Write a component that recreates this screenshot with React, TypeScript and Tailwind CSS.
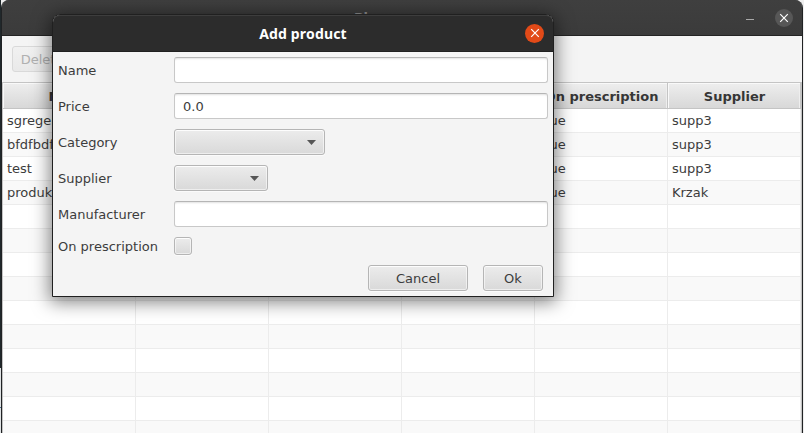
import React from 'react';

const columns = ['Name', 'Price', 'Category', 'Manufacturer', 'On prescription', 'Supplier'];

const products: string[][] = [
  ['sgregergerg', '0.0', '', '', 'true', 'supp3'],
  ['bfdfbdfb', '0.0', '', '', 'true', 'supp3'],
  ['test', '0.0', '', '', 'true', 'supp3'],
  ['produkt', '0.0', '', '', 'true', 'Krzak'],
];

const emptyRows: string[][] = Array.from({ length: 10 }, () => ['', '', '', '', '', '']);

const buttonFace =
  'rounded-[3px] border border-[#b5b5b5] bg-linear-to-b from-[#ececec] to-[#d9d9d9] shadow-[inset_0_0_0_1px_rgba(255,255,255,0.55),inset_0_1px_0_#fafafa,0_1px_0_#fbfbfb]';

function Cross() {
  return (
    <svg width="18" height="18" viewBox="0 0 18 18" fill="none" stroke="#fff" strokeWidth="1.2">
      <path d="M5.2 5.2 12.8 12.8M12.8 5.2 5.2 12.8" />
    </svg>
  );
}

function TextField({ value = '' }: { value?: string }) {
  return (
    <div className="h-[26px] w-[374px] rounded-[3px] border border-[#c8c8c8] border-t-[#b5b5b5] bg-white px-2 pt-px leading-6 shadow-[inset_0_2px_2px_-1px_rgba(0,0,0,0.12)]">
      {value}
    </div>
  );
}

function ComboBox({ width }: { width: string }) {
  return (
    <div className={`${width} flex h-[26px] items-center justify-end pr-2 ${buttonFace}`}>
      <svg width="9" height="5" viewBox="0 0 9 5" fill="#565656">
        <path d="M0 0H9L4.5 5Z" />
      </svg>
    </div>
  );
}

function Field({ label, children }: { label: string; children: React.ReactNode }) {
  return (
    <div className="flex items-center">
      <span className="w-[116px] shrink-0 whitespace-nowrap pt-[2px] leading-4">{label}</span>
      {children}
    </div>
  );
}

function AddProductDialog() {
  return (
    <section className="absolute left-[52px] top-[14px] h-[283px] w-[502px] overflow-visible rounded-t-lg border border-[#202020] bg-[#f4f4f4] shadow-[0_3px_18px_2px_rgba(0,0,0,0.5)]">
      <header className="flex h-[37px] items-center rounded-t-[7px] border-b border-[#202020] bg-[#2c2c2c] pr-[9px] shadow-[inset_0_1px_0_#3d3d3d]">
        <h1 className="ml-[28px] flex-1 pt-px text-center font-['Noto_Sans',sans-serif] text-[14px] font-bold leading-5 tracking-[0.15px] text-white">
          Add product
        </h1>
        <button className="grid size-[19px] place-items-center rounded-full bg-[#e24a18]">
          <Cross />
        </button>
      </header>
      <div className="flex flex-col gap-[10px] pl-[5px] pt-[5px]">
        <Field label="Name"><TextField /></Field>
        <Field label="Price"><TextField value="0.0" /></Field>
        <Field label="Category"><ComboBox width="w-[151px]" /></Field>
        <Field label="Supplier"><ComboBox width="w-[94px]" /></Field>
        <Field label="Manufacturer"><TextField /></Field>
        <Field label="On prescription">
          <div className={`size-[18px] ${buttonFace}`} />
        </Field>
        <div className="flex justify-end gap-[15px] pr-[10px]">
          <button className={`h-[26px] w-[100px] pt-[2px] leading-5 ${buttonFace}`}>Cancel</button>
          <button className={`h-[26px] w-[60px] pt-[2px] leading-5 ${buttonFace}`}>Ok</button>
        </div>
      </div>
    </section>
  );
}

export default function App() {
  return (
    <main className="relative flex h-[433px] w-[804px] overflow-hidden bg-[#eeeeee] font-['DejaVu_Sans',sans-serif] text-[13px] text-[#3c3c3c]">
      <div className="flex w-px flex-col">
        <div className="h-[368px] bg-[#20282b]" />
        <div className="h-[39px] bg-[#dfe2e3]" />
        <div className="h-px bg-[#4b6f91]" />
        <div className="flex-1 bg-[#dfe2e3]" />
      </div>
      <div className="flex w-[802px] flex-col overflow-hidden rounded-t-lg border-x border-[#202224] bg-[#f4f4f4]">
        <header className="flex h-9 shrink-0 items-center border-b border-[#242424] bg-[#3d3d3d] bg-linear-to-b from-[#3f3f3f] to-[#3b3b3b]">
          <span className="ml-[352px] w-[80px] text-[13px] font-bold leading-5 text-[#929292]">Pharmacy</span>
          <span className="ml-[312px] mt-[3px] h-px w-2 bg-[#a9a9a9]" />
          <button className="ml-[21px] grid size-[18px] place-items-center rounded-full bg-[#575757]">
            <Cross />
          </button>
        </header>
        <div className="h-[46px] shrink-0 pl-[10px] pt-[10px]">
          <button className="h-[26px] w-[60px] rounded-[3px] border border-[#d9d9d9] bg-linear-to-b from-[#f1f1f1] to-[#e9e9e9] pt-px text-[#b0b0b0]">
            Delete
          </button>
        </div>
        <div className="h-[351px] w-[800px] shrink-0 border-x border-t border-[#c4c4c4] bg-white">
          <div className="flex h-[26px] w-[798px] border-b border-[#c4c4c4]">
            {columns.map((column) => (
              <div
                key={column}
                className="flex w-[133px] items-center justify-center whitespace-nowrap border-r border-[#c4c4c4] bg-linear-to-b from-[#eeeeee] to-[#d8d8d8] pl-px font-bold text-[#363636] shadow-[inset_1px_1px_0_#f9f9f9,inset_-1px_0_0_#eeeeee]"
              >
                <span className="pt-[2px] leading-4">{column}</span>
              </div>
            ))}
          </div>
          {[...products, ...emptyRows].map((row, index) => (
            <div key={index} className="flex h-6 w-[798px] border-b border-[#ececec] odd:bg-[#f9f9f9] even:bg-white">
              {row.map((cell, cellIndex) => (
                <div key={cellIndex} className="w-[133px] overflow-hidden border-r border-[#ececec] pl-1 leading-[23px]">
                  {cell}
                </div>
              ))}
            </div>
          ))}
        </div>
      </div>
      <AddProductDialog />
    </main>
  );
}
